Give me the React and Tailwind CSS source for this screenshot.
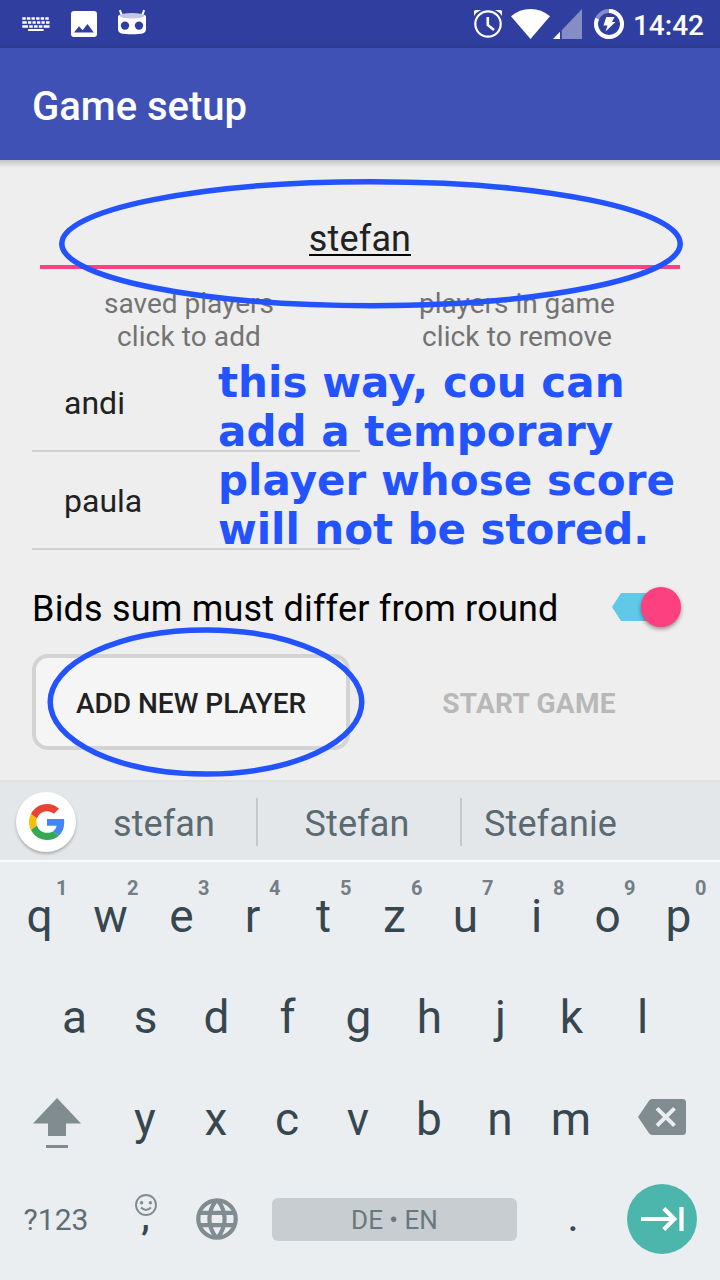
const TOP_ROW = ['q', 'w', 'e', 'r', 't', 'z', 'u', 'i', 'o', 'p'];
const HOME_ROW = ['a', 's', 'd', 'f', 'g', 'h', 'j', 'k', 'l'];
const BOTTOM_ROW = ['y', 'x', 'c', 'v', 'b', 'n', 'm'];

function KeyboardIcon() {
  return (
    <svg className="h-4 w-7" viewBox="0 0 28 16" fill="none" stroke="#fff">
      <path d="M0.3 2.6H27.500" strokeWidth="2.500" strokeDasharray="3.400 1.200" />
      <path d="M0.3 6.500H27.500" strokeWidth="2.500" strokeDasharray="4.500 1.200 3.300 1.200 3.300 1.200 3.300 1.200 3.300 1.200 3.800 1" />
      <path d="M0.3 10.400H27.500" strokeWidth="2.500" strokeDasharray="5.700 1.200 3.600 1.200 3.600 1.200 3.600 1.200 7 1" />
      <path d="M6 14H21.600" strokeWidth="2" />
    </svg>
  );
}

function ImageIcon() {
  return (
    <svg className="h-[26px] w-[26px]" viewBox="0 0 26 26">
      <path
        fill="#fff"
        fillRule="evenodd"
        d="M3 0H23a3 3 0 0 1 3 3V23a3 3 0 0 1-3 3H3a3 3 0 0 1-3-3V3a3 3 0 0 1 3-3ZM3 21.5H22.8L16.5 13L11.6 19.2L8 15.2Z"
      />
    </svg>
  );
}

function RobotIcon() {
  return (
    <svg className="h-[26px] w-7" viewBox="0 0 28 26">
      <path d="M1.8 1.200L3.8 6M26.2 1.200L24.2 6" stroke="#fff" strokeWidth="2" />
      <path fill="#fff" d="M0 8C0 5 4 5 14 5S28 5 28 8V20C28 24.8 24 25.2 14 25.2S0 24.8 0 20Z" />
      <ellipse cx="14" cy="6.800" rx="12.3" ry="2.800" fill="#c3c7e6" />
      <circle cx="7" cy="16.6" r="4.2" fill="#303f9f" />
      <circle cx="21" cy="16.6" r="4.2" fill="#303f9f" />
    </svg>
  );
}

function AlarmIcon() {
  return (
    <svg className="h-7 w-7" viewBox="0 0 28 28" fill="none" stroke="#fff">
      <circle cx="14" cy="14" r="12.7" strokeWidth="2.2" />
      <path d="M13.8 7V15L20 20" strokeWidth="2.6" />
      <path fill="#fff" stroke="none" d="M0 6V1.5Q0 0 1.5 0H7Q2.500 2 0 6ZM28 6V1.500Q28 0 26.500 0H21Q25.500 2 28 6Z" />
    </svg>
  );
}

function WifiIcon() {
  return (
    <svg className="h-[30px] w-[39px]" viewBox="0 0 39 30">
      <path fill="#fff" d="M19.500 30L0 7.300Q8.500 0 19.500 0T39 7.300Z" />
    </svg>
  );
}

function SignalIcon() {
  return (
    <svg className="h-[30px] w-[29px]" viewBox="0 0 29 30">
      <path fill="#858cc6" d="M8.500 30V21.500L29 0V30Z" />
      <path fill="#fff" d="M0 30L7 22.700V30Z" />
      <path stroke="#303f9f" strokeWidth="1.300" d="M7.900 20V30" />
    </svg>
  );
}

function BatteryIcon() {
  return (
    <svg className="h-[30px] w-[30px]" viewBox="0 0 30 30">
      <circle cx="15" cy="15" r="13" fill="none" stroke="#858cc6" strokeWidth="4" />
      <path d="M15 2A13 13 0 1 1 3.200 9.600" fill="none" stroke="#fff" strokeWidth="4" />
      <path fill="#fff" d="M12.300 8H20.500L18 13H21.500L11.500 22.500L13.500 16.500H9.500Z" />
    </svg>
  );
}

function GoogleLogo() {
  return (
    <svg className="h-9 w-9" viewBox="0 0 48 48">
      <path fill="#EA4335" d="M24 9.500c3.540 0 6.710 1.220 9.210 3.600l6.850-6.850C35.900 2.380 30.470 0 24 0 14.620 0 6.510 5.380 2.560 13.220l7.980 6.190C12.430 13.720 17.740 9.500 24 9.500z" />
      <path fill="#4285F4" d="M46.980 24.550c0-1.570-.15-3.090-.38-4.550H24v9.020h12.940c-.58 2.960-2.260 5.480-4.780 7.180l7.730 6c4.510-4.180 7.090-10.360 7.090-17.650z" />
      <path fill="#FBBC05" d="M10.530 28.590c-.48-1.450-.76-2.990-.76-4.590s.27-3.140.76-4.590l-7.980-6.190C.92 16.460 0 20.120 0 24c0 3.880.92 7.540 2.560 10.780l7.970-6.190z" />
      <path fill="#34A853" d="M24 48c6.480 0 11.930-2.130 15.890-5.810l-7.730-6c-2.150 1.450-4.920 2.300-8.160 2.300-6.260 0-11.570-4.220-13.470-9.910l-7.980 6.190C6.510 42.620 14.620 48 24 48z" />
    </svg>
  );
}

function ShiftIcon() {
  return (
    <svg className="h-[50px] w-12" viewBox="0 0 48 50" fill="#808c90">
      <path d="M24 0L48 25.500H33V38H15V25.500H0Z" />
      <path d="M13 47H35V50H13Z" />
    </svg>
  );
}

function BackspaceIcon() {
  return (
    <svg className="h-9 w-12" viewBox="0 0 48 36">
      <path fill="#808c90" d="M14 0H44.500Q48 0 48 3.500V32.500Q48 36 44.500 36H14Q12.300 36 11 34.300L0 18L11 1.700Q12.300 0 14 0Z" />
      <path d="M19 9.300L36.500 26.700M36.500 9.300L19 26.700" stroke="#ebeef1" strokeWidth="4" />
    </svg>
  );
}

function SmileIcon() {
  return (
    <svg className="h-[22px] w-[22px]" viewBox="0 0 22 22">
      <circle cx="11" cy="11" r="10" fill="none" stroke="#808c90" strokeWidth="1.900" />
      <circle cx="6.600" cy="8.700" r="1.700" fill="#808c90" />
      <circle cx="15.400" cy="8.700" r="1.700" fill="#808c90" />
      <path d="M6 13.500Q11 18.300 16 13.500" fill="none" stroke="#808c90" strokeWidth="1.900" />
    </svg>
  );
}

function GlobeIcon() {
  return (
    <svg className="h-[42px] w-[42px]" viewBox="0 0 42 42" fill="none" stroke="#808c90" strokeWidth="4.200">
      <circle cx="21" cy="21" r="18.700" />
      <path d="M20.500 2C11 14 11 28 20.500 40M21.500 2C31 14 31 28 21.500 40M4 14.800H38M4 27.200H38" />
    </svg>
  );
}

function NextIcon() {
  return (
    <svg className="h-6 w-[43px]" viewBox="0 0 43 24" fill="none" stroke="#fff" strokeWidth="4.200">
      <path d="M0 12H34M22.800 1.500L33.300 12L22.800 22.500M40.500 0V24" />
    </svg>
  );
}

function StatusBar() {
  return (
    <header className="flex h-12 items-center bg-[#303f9f] bg-linear-to-b from-[#303f9f] from-90% to-[#2b388c] pr-4 pl-[22px] text-white">
      <KeyboardIcon />
      <div className="ml-[21px]">
        <ImageIcon />
      </div>
      <div className="mb-1 ml-[21px]">
        <RobotIcon />
      </div>
      <div className="ml-auto flex items-center">
        <AlarmIcon />
        <div className="ml-[9px]">
          <WifiIcon />
        </div>
        <div className="ml-[3px]">
          <SignalIcon />
        </div>
        <div className="ml-3">
          <BatteryIcon />
        </div>
        <span className="ml-[9px] pt-[3px] text-[28px] leading-8 font-medium">14:42</span>
      </div>
    </header>
  );
}

function PlayerRow({ name }) {
  return (
    <li className="flex h-[98px] items-center border-b-2 border-[#d0d0d0] pt-0.5 pl-8 text-[32px] text-[#212121]">
      {name}
    </li>
  );
}

function SetupForm() {
  return (
    <main className="flex h-[620px] flex-col bg-[#eeeeee] bg-linear-to-b from-[#c4c4c4] to-[#eeeeee] to-[8px] px-8 pt-[54px]">
      <div className="mx-2 flex h-[55px] justify-center border-b-4 border-[#ff4081]">
        <span className="h-[42px] border-b-2 border-black text-[36px] leading-[50px] tracking-[0.15px] text-[#212121]">stefan</span>
      </div>
      <div className="mt-[18px] flex h-[67px] text-center text-[28px] leading-[33px] text-[#737373]">
        <p className="w-[314px]">
          saved players
          <br />
          <span className="tracking-[0.1px]">click to add</span>
        </p>
        <p className="w-[342px]">
          players in game
          <br />
          <span className="tracking-[0.1px]">click to remove</span>
        </p>
      </div>
      <ul className="h-[196px] w-[328px]">
        <PlayerRow name="andi" />
        <PlayerRow name="paula" />
      </ul>
      <div className="mt-[27px] flex h-[60px] items-center justify-between pr-[7px]">
        <span className="pt-[3px] text-[36px] tracking-[0.2px] text-black">Bids sum must differ from round</span>
        <div className="flex items-center">
          <svg className="h-7 w-9" viewBox="0 0 36 28">
            <path fill="#60c9e8" d="M9 0H36V28H9L0 14Z" />
          </svg>
          <div className="-ml-[7px] h-10 w-10 rounded-full bg-[#fc4080] shadow-[0_2px_4px_rgba(0,0,0,0.4)]" />
        </div>
      </div>
      <div className="mt-[17px] flex gap-[20px]">
        <button className="h-24 w-[318px] rounded-2xl border-4 border-[#d3d3d3] bg-[#f5f5f5] pt-1 text-[28px] font-medium text-[#212121]">
          ADD NEW PLAYER
        </button>
        <button className="h-24 w-[318px] pt-1 text-[28px] font-bold tracking-[0.25px] text-[#b8b8b8]">START GAME</button>
      </div>
    </main>
  );
}

function Letter({ char, hint }) {
  return (
    <div className="relative flex h-full w-[71px] items-center justify-center text-[46px] text-[#37474f]">
      {char}
      {hint && <span className="absolute top-[10px] left-[52px] text-xl leading-6 font-bold text-[#737f84]">{hint}</span>}
    </div>
  );
}

function Keyboard() {
  return (
    <section className="flex h-[500px] flex-col bg-[#ebeef1]">
      <div className="flex h-[82px] items-center border-t-2 border-b-2 border-t-[#e0e2e3] border-b-[#f7f9fa] bg-[#e3e7e9] pl-4 text-[36px] tracking-[0.1px] text-[#5b6a71]">
        <div className="mt-0.5 flex h-[60px] w-[60px] items-center justify-center rounded-full bg-white pl-0.5 shadow-[0_2px_3px_rgba(0,0,0,0.25)]">
          <GoogleLogo />
        </div>
        <span className="w-[180px] pt-1.5 pr-1 text-center">stefan</span>
        <span className="mt-0.5 h-12 w-0.5 bg-[#c3c8cb]" />
        <span className="w-[202px] pt-1.5 pr-1 text-center">Stefan</span>
        <span className="mt-0.5 h-12 w-0.5 bg-[#c3c8cb]" />
        <span className="w-[180px] pt-1.5 pr-[3px] text-center">Stefanie</span>
      </div>
      <div className="mt-[4px] flex h-[101px] pl-1">
        {TOP_ROW.map((char, i) => (
          <Letter key={char} char={char} hint={String((i + 1) % 10)} />
        ))}
      </div>
      <div className="flex h-[101px] pl-[39px]">
        {HOME_ROW.map((char) => (
          <Letter key={char} char={char} />
        ))}
      </div>
      <div className="flex h-[102px] items-center">
        <div className="flex w-[109.5px] justify-center pt-2 pl-[4.5px]">
          <ShiftIcon />
        </div>
        {BOTTOM_ROW.map((char) => (
          <Letter key={char} char={char} />
        ))}
        <div className="ml-[31.5px] pb-1">
          <BackspaceIcon />
        </div>
      </div>
      <div className="flex h-[98px] items-center">
        <span className="w-[112px] pt-px text-center text-[30px] text-[#5f6e74]">?123</span>
        <div className="flex h-[70px] w-[68px] flex-col items-center pt-[10px]">
          <SmileIcon />
          <span className="-mt-2 pr-px text-[38px] leading-4 font-medium text-[#37474f]">,</span>
        </div>
        <div className="ml-4">
          <GlobeIcon />
        </div>
        <div className="ml-[34px] flex h-[43px] w-[245px] items-center justify-center rounded-md bg-[#c8cdd1] pt-0.5 text-[26px] text-[#6a777d]">
          DE • EN
        </div>
        <span className="w-[110px] pl-0.5 text-center text-[36px] font-medium text-[#37474f]">.</span>
        <div className="flex h-[70px] w-[70px] items-center justify-center rounded-full bg-[#4db6ac]">
          <NextIcon />
        </div>
      </div>
    </section>
  );
}

function Annotations() {
  return (
    <div className="pointer-events-none absolute inset-0">
      <svg className="absolute inset-0 h-[1280px] w-[720px]" viewBox="0 0 720 1280" fill="none" stroke="#2253ff" strokeWidth="5.500">
        <ellipse cx="371" cy="243.700" rx="309.200" ry="62" />
        <ellipse cx="206" cy="702" rx="155.800" ry="72" />
      </svg>
      <p className="absolute top-[358px] left-[218px] font-['DejaVu_Sans',sans-serif] text-[42px] leading-[49px] font-bold tracking-[0.04px] whitespace-nowrap text-[#2253ff]">
        this way, cou can
        <br />
        add a temporary
        <br />
        player whose score
        <br />
        <span className="tracking-[-0.06px]">will not be stored.</span>
      </p>
    </div>
  );
}

export default function App() {
  return (
    <div className="relative h-[1280px] w-[720px] overflow-hidden font-[Roboto,sans-serif]">
      <StatusBar />
      <div className="flex h-28 items-center bg-[#3f51b5] pt-1.5 pl-8 text-[40px] font-medium text-white">Game setup</div>
      <SetupForm />
      <Keyboard />
      <Annotations />
    </div>
  );
}
